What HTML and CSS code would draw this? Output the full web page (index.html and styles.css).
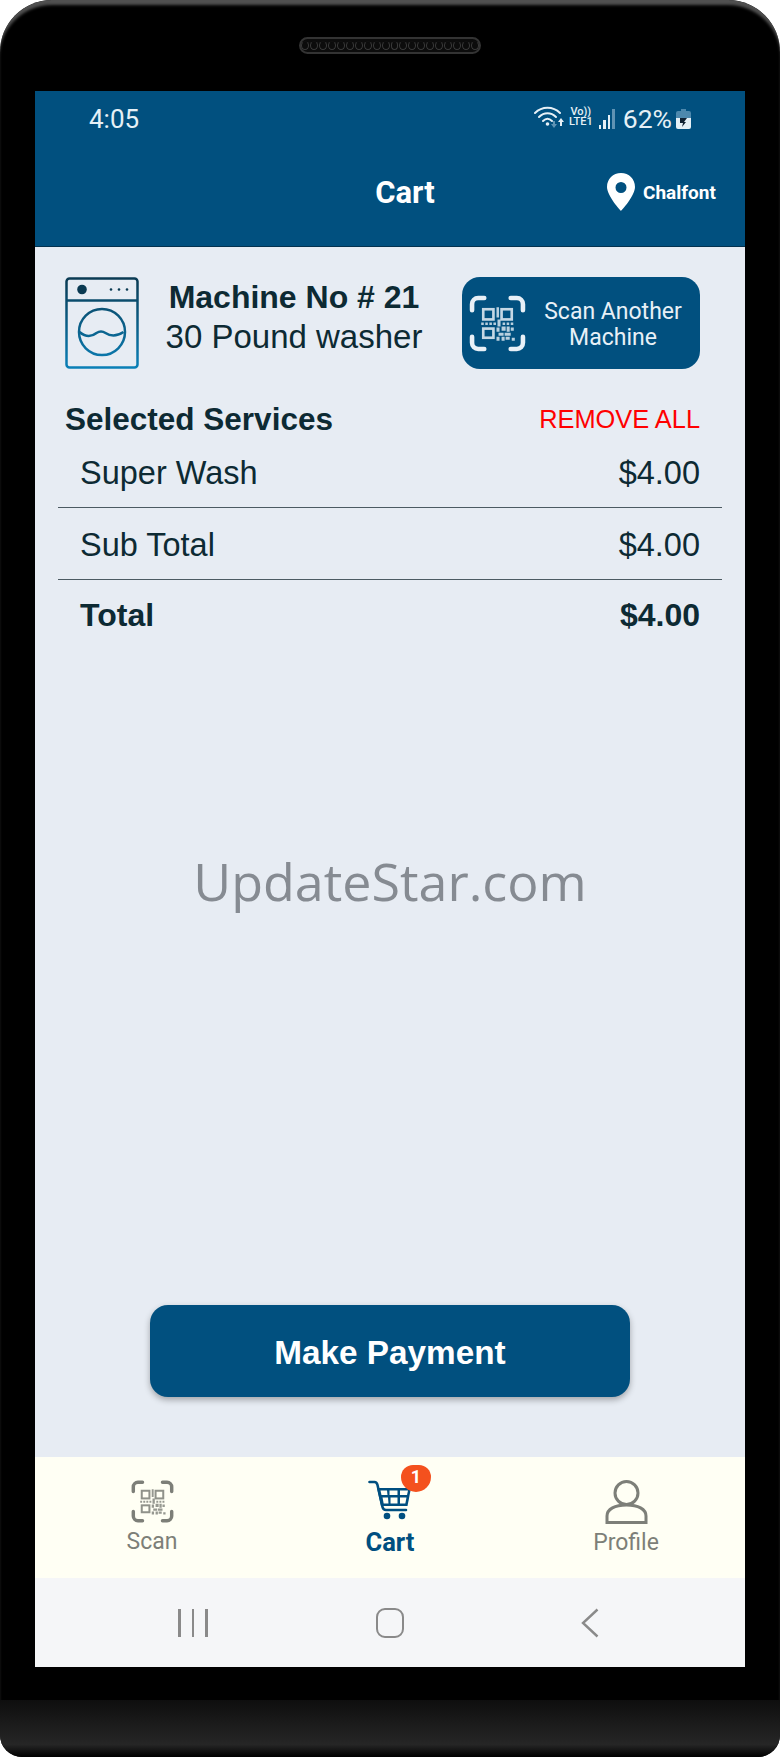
FILE: index.html
```html
<!DOCTYPE html>
<html lang="en">
<head>
    <meta charset="UTF-8">
    <meta name="viewport" content="width=device-width, initial-scale=1.0">
    <title>Cart</title>
    <link rel="stylesheet" href="styles.css">
</head>
<body>
<svg class="defs" width="0" height="0">
    <defs>
        <symbol id="qr" viewBox="0 0 56 56">
            <g fill="none" stroke="currentColor" stroke-width="4.500" stroke-linecap="round">
                <path d="M3 15V9a6 6 0 0 1 6-6h6"/>
                <path d="M41 3h6a6 6 0 0 1 6 6v6"/>
                <path d="M53 41v6a6 6 0 0 1-6 6h-6"/>
                <path d="M15 53H9a6 6 0 0 1-6-6v-6"/>
            </g>
            <g fill="none" stroke="currentColor" stroke-width="2.600" opacity="0.85">
                <rect x="14" y="14" width="10" height="10"/>
                <rect x="32" y="14" width="10" height="10"/>
                <rect x="14" y="33" width="10" height="9"/>
            </g>
            <g fill="currentColor" opacity="0.8">
                <path d="M27 12h2.500v10H27zM12 27h2.500v2.500H12zM16 27h2.500v2.500H16zM20 27h2.500v2.500H20zM24 27h2.500v2.500H24zM28 24h3v7h-3zM33 27h2.500v2.500H33zM37 27h2.500v2.500H37zM41 27h2.500v2.500H41z"/>
                <path d="M27 32h3v4h-3zM32 31h4v4h-4zM37 31h3v5h-3zM41 32h3v3h-3zM29 37h5v3h-5zM35 37h6v3h-6zM27 41h3v4h-3zM32 41h3v4h-3zM36 41h4v3h-4zM42 42h3v3h-3z"/>
            </g>
        </symbol>
    </defs>
</svg>

<div class="phone">
    <div class="top_bezel">
        <div class="speaker">
            <i></i><i></i><i></i><i></i><i></i><i></i><i></i><i></i><i></i><i></i>
            <i></i><i></i><i></i><i></i><i></i><i></i><i></i><i></i><i></i><i></i>
        </div>
    </div>

    <div class="screen">
        <div class="header">
            <div class="status">
                <span class="time">4:05</span>
                <div class="status_icons">
                    <svg class="wifi" width="30" height="22" viewBox="0 0 30 22">
                        <g fill="none" stroke="#e6f0f6" stroke-width="2" stroke-linecap="round">
                            <path d="M1 7C8 0 19 0 26 7"/>
                            <path d="M5 11C10 6 17 6 22 11"/>
                            <path d="M9 15C12 12 15 12 18 15"/>
                        </g>
                        <circle cx="13.500" cy="18" r="1.800" fill="#e6f0f6"/>
                        <path d="M20 22l-3-4h2v-3h2v3h2z" fill="#5f93b4"/>
                        <path d="M27 12l3 4h-2v4h-2v-4h-2z" fill="#e6f0f6"/>
                    </svg>
                    <div class="net"><span>Vo))</span><span>LTE1</span></div>
                    <div class="signal"><i class="s1"></i><i class="s2"></i><i class="s3"></i><i class="s4"></i></div>
                    <span class="battery_text">62%</span>
                    <svg class="battery" width="15" height="20" viewBox="0 0 15 20">
                        <path d="M5 0h5v2h3a2 2 0 0 1 2 2v5H0V4a2 2 0 0 1 2-2h3z" fill="#4d88ad"/>
                        <path d="M0 9h15v9a2 2 0 0 1-2 2H2a2 2 0 0 1-2-2z" fill="#e6f0f6"/>
                        <path d="M4 9h7l-3 4h2l-4 5 1-4H4z" fill="#123"/>
                    </svg>
                </div>
            </div>
            <div class="title_row">
                <b class="title">Cart</b>
                <div class="location">
                    <svg width="28" height="38" viewBox="0 0 28 38">
                        <path fill-rule="evenodd" d="M14 0C6 0 0 6 0 14c0 9 14 24 14 24s14-15 14-24C28 6 22 0 14 0zm0 9a5.500 5.500 0 1 1 0 11 5.500 5.500 0 0 1 0-11z" fill="#fff"/>
                    </svg>
                    <b>Chalfont</b>
                </div>
            </div>
        </div>

        <div class="content">
            <div class="machine">
                <svg class="washer" width="74" height="92" viewBox="0 0 74 92">
                    <defs>
                        <linearGradient id="washer_line" gradientUnits="userSpaceOnUse" x1="0" y1="0" x2="0" y2="92">
                            <stop offset="0" stop-color="#0b3a52"/>
                            <stop offset="1" stop-color="#0a80b8"/>
                        </linearGradient>
                    </defs>
                    <g fill="none" stroke="url(#washer_line)" stroke-width="2.500">
                        <rect x="1.500" y="1.500" width="71" height="89" rx="3"/>
                        <path d="M1.500 23.500h71"/>
                        <circle cx="37" cy="55" r="23"/>
                        <path d="M14.500 55c6 5 12 5 17 1 3-2 6-2 9 0 6 4 12 3 18-1"/>
                    </g>
                    <circle cx="17" cy="12.500" r="4.800" fill="#0b3a52"/>
                    <g fill="#0b3a52">
                        <circle cx="46" cy="12.500" r="1.300"/>
                        <circle cx="54" cy="12.500" r="1.300"/>
                        <circle cx="62" cy="12.500" r="1.300"/>
                    </g>
                </svg>
                <div class="machine_info">
                    <b>Machine No # 21</b>
                    <span>30 Pound washer</span>
                </div>
                <div class="scan_btn">
                    <svg class="scan_icon" width="57" height="57"><use href="#qr"/></svg>
                    <span>Scan Another<br>Machine</span>
                </div>
            </div>

            <div class="services_head">
                <b>Selected Services</b>
                <span>REMOVE ALL</span>
            </div>

            <div class="row line"><span>Super Wash</span><span>$4.00</span></div>
            <div class="row line"><span>Sub Total</span><span>$4.00</span></div>
            <div class="row total"><span>Total</span><span>$4.00</span></div>

            <div class="watermark">UpdateStar.com</div>

            <button type="button" class="pay_btn">Make Payment</button>
        </div>

        <div class="tabs">
            <div class="tab">
                <svg class="tab_icon" width="43" height="43"><use href="#qr"/></svg>
                <span>Scan</span>
            </div>
            <div class="tab active">
                <div class="cart_wrap">
                    <svg width="44" height="40" viewBox="0 0 44 40">
                        <g fill="none" stroke="#004f80" stroke-width="2.600" stroke-linecap="round" stroke-linejoin="round">
                            <path d="M1.500 2h5c2 0 2.500 1 3 3l5 22c.5 2 1.500 3 3.500 3h20"/>
                        </g>
                        <path d="M9 8h34l-3.500 18H13z" fill="#004f80"/>
                        <g fill="#fffff4">
                            <path d="M12.500 10.500h6.500l.5 4.500h-6z"/>
                            <path d="M21.500 10.500h8v4.500h-8z"/>
                            <path d="M32 10.500h8l-1 4.500h-7z"/>
                            <path d="M14.500 17.500h5.500l.5 6h-4.800z"/>
                            <path d="M22.500 17.500h7v6h-7z"/>
                            <path d="M32 17.500h6.500l-1.200 6H32z"/>
                        </g>
                        <circle cx="19" cy="36" r="3.300" fill="#004f80"/>
                        <circle cx="34" cy="36" r="3.300" fill="#004f80"/>
                    </svg>
                    <div class="badge"><span>1</span></div>
                </div>
                <span>Cart</span>
            </div>
            <div class="tab">
                <svg class="tab_icon" width="43" height="44" viewBox="0 0 43 44">
                    <g fill="none" stroke="#7d7f78" stroke-width="3">
                        <circle cx="21.500" cy="13" r="11.500"/>
                        <path d="M2 42.500V36c0-7 8-11 19.500-11S41 29 41 36v6.500z"/>
                    </g>
                </svg>
                <span>Profile</span>
            </div>
        </div>

        <div class="softkeys">
            <div class="recent"><i></i><i></i><i></i></div>
            <div class="home"></div>
            <svg class="back" width="18" height="30" viewBox="0 0 18 30">
                <path d="M16.500 1.500L2 15l14.500 13.500" fill="none" stroke="#8a8a8a" stroke-width="2.400"/>
            </svg>
        </div>
    </div>

    <div class="gap"></div>
    <div class="chin"></div>
</div>
</body>
</html>
```

FILE: styles.css
```css
* {
    box-sizing: border-box;
}

body {
    margin: 0;
    background-color: #fff;
    font-family: 'Liberation Sans', Arial, sans-serif;
}

svg.defs {
    position: absolute;
}

svg {
    display: block;
}

div.phone {
    width: 780px;
    height: 1757px;
    background-color: #000;
    border-radius: 52px 52px 22px 22px;
    overflow: hidden;
    box-shadow: inset 0 6px 3px -1px #505050;
    display: flex;
    flex-direction: column;
}

div.top_bezel {
    height: 91px;
    padding-top: 37px;
}

div.speaker {
    width: 182px;
    height: 17px;
    margin: 0 auto;
    border: 2px solid #333;
    border-radius: 9px;
    background-color: #0c0c0c;
    display: flex;
    justify-content: center;
    gap: 1px;
    padding-top: 2px;
}

div.speaker i {
    width: 8px;
    height: 9px;
    border: 1px solid #3a3a3a;
    border-top-color: #111;
    border-radius: 50%;
}

div.screen {
    width: 710px;
    height: 1576px;
    margin-left: 35px;
    display: flex;
    flex-direction: column;
    background-color: #e7ecf3;
}

/* header */
div.header {
    height: 156px;
    background-color: #01507f;
    border-bottom: 1px solid #03324f;
    color: #fff;
    font-family: Roboto, sans-serif;
}

div.status {
    height: 50px;
    padding: 13px 54px 0 54px;
    display: flex;
    justify-content: space-between;
    color: #e6f0f6;
}

span.time {
    font-size: 26px;
    line-height: 30px;
}

div.status_icons {
    display: flex;
    align-items: flex-start;
}

svg.wifi {
    margin-top: 2px;
}

div.net {
    width: 28px;
    margin-left: 3px;
    margin-top: 3px;
    display: flex;
    flex-direction: column;
    align-items: center;
    font-size: 11px;
    line-height: 10px;
    font-weight: 500;
}

div.signal {
    margin: 5px 0 0 4px;
    height: 20px;
    display: flex;
    align-items: flex-end;
    gap: 2px;
}

div.signal i {
    width: 2.500px;
    background-color: #e6f0f6;
}

div.signal i.s1 { height: 4px; }
div.signal i.s2 { height: 9px; }
div.signal i.s3 { height: 14px; }
div.signal i.s4 { height: 20px; background-color: #5f93b4; }

span.battery_text {
    margin-left: 8px;
    font-size: 26.500px;
    line-height: 30px;
}

svg.battery {
    margin: 5px 0 0 4px;
}

div.title_row {
    height: 105px;
    position: relative;
    padding-top: 27px;
    padding-left: 30px;
    text-align: center;
}

b.title {
    font-size: 31px;
    line-height: 50px;
}

div.location {
    position: absolute;
    left: 572px;
    top: 32px;
    display: flex;
    align-items: center;
    gap: 8px;
    font-size: 19px;
}

/* content */
div.content {
    flex: 1;
    padding: 30px 23px 60px;
    display: flex;
    flex-direction: column;
    position: relative;
}

div.machine {
    display: flex;
    padding: 0 22px 0 7px;
    align-items: center;
}

div.machine_info {
    margin-left: 25px;
    padding-bottom: 12px;
    width: 260px;
    text-align: center;
    color: #0d2a33;
    font-size: 32px;
    display: flex;
    flex-direction: column;
    line-height: 39px;
    white-space: nowrap;
}

div.machine_info span {
    font-size: 33px;
}

div.scan_btn {
    width: 238px;
    height: 92px;
    margin-left: auto;
    background-color: #01507f;
    border-radius: 18px;
    color: #e8f0f7;
    padding-left: 7px;
    display: flex;
    align-items: center;
    font-family: Roboto, sans-serif;
    font-size: 23px;
    line-height: 26px;
    text-align: center;
}

svg.scan_icon {
    flex-shrink: 0;
}

div.scan_btn span {
    flex: 1;
    padding-top: 4px;
}

div.services_head {
    margin-top: 33px;
    padding: 0 22px 0 7px;
    height: 34px;
    line-height: 34px;
    display: flex;
    justify-content: space-between;
    color: #0d2a33;
    font-size: 31.500px;
}

div.services_head span {
    color: #f00;
    font-size: 25.400px;
}

div.row {
    height: 72px;
    padding: 0 22px;
    display: flex;
    justify-content: space-between;
    align-items: center;
    color: #0d2a33;
    font-size: 32.500px;
}

div.row.line {
    padding-top: 3px;
    border-bottom: 1px solid #4c5a62;
}

div.row.total {
    padding-bottom: 2px;
    font-weight: bold;
    font-size: 32px;
}

div.watermark {
    position: absolute;
    left: 0;
    right: 0;
    top: 599px;
    text-align: center;
    color: #868b92;
    font-family: 'Open Sans', sans-serif;
    font-size: 52px;
    line-height: 70px;
}

button.pay_btn {
    width: 480px;
    height: 92px;
    margin: auto auto 0;
    padding-top: 4px;
    border: 0;
    border-radius: 18px;
    background-color: #01507f;
    color: #fff;
    font-family: 'Liberation Sans', Arial, sans-serif;
    font-size: 33.300px;
    font-weight: bold;
    box-shadow: 0 3px 6px rgba(0, 0, 0, 0.3);
}

/* bottom tabs */
div.tabs {
    height: 121px;
    background-color: #fffff4;
    position: relative;
    font-family: Roboto, sans-serif;
    font-size: 23px;
    color: #7d7f78;
    display: grid;
    grid-template-columns: 234px 242px 230px;
}

div.tab {
    padding-top: 23px;
    display: flex;
    flex-direction: column;
    align-items: center;
}

div.tab span {
    margin-top: 5px;
    line-height: 28px;
}

div.tab.active {
    color: #004f80;
    font-weight: bold;
    font-size: 25.500px;
}

div.cart_wrap {
    position: relative;
    height: 43px;
}

div.badge {
    position: absolute;
    left: 33px;
    top: -15px;
    width: 30px;
    height: 27px;
    border-radius: 12px 12px 15px 15px;
    background-color: #f4511e;
    color: #fff;
    font-size: 18px;
    text-align: center;
}

div.tab div.badge span {
    display: block;
    margin: 0;
    line-height: 24px;
}

/* android keys */
div.softkeys {
    height: 89px;
    background-color: #f5f6f8;
    display: flex;
    align-items: center;
    padding-left: 143px;
}

div.recent {
    display: flex;
    gap: 11px;
}

div.recent i {
    width: 2.500px;
    height: 28px;
    background-color: #8a8a8a;
}

div.home {
    width: 28px;
    height: 30px;
    margin-left: 168px;
    border: 2.500px solid #8a8a8a;
    border-radius: 9px;
}

svg.back {
    margin-left: 177px;
}

div.gap {
    height: 33px;
}

div.chin {
    flex: 1;
    background: linear-gradient(#0e0e0e, #262626 78%, #000);
}
```
